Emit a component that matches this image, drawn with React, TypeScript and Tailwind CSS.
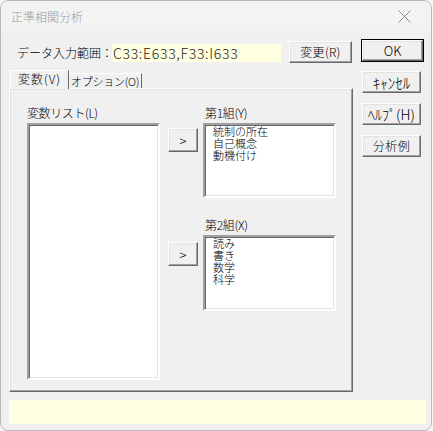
import React from 'react';

const FONT = { fontFamily: '"Noto Sans CJK JP", "Noto Sans", sans-serif' };

const btn3d =
  'flex items-center justify-center bg-[#f0f0f0] text-[12px] leading-none text-black whitespace-nowrap border border-t-white border-l-white border-b-[#696969] border-r-[#696969] shadow-[inset_-1px_-1px_0_#a0a0a0,inset_1px_1px_0_#e3e3e3]';

const sunken =
  'bg-white border-2 border-t-[#a0a0a0] border-l-[#a0a0a0] border-b-white border-r-white shadow-[inset_1px_1px_0_#696969,inset_-1px_-1px_0_#e3e3e3]';

const Btn: React.FC<{ label: string; className?: string }> = ({ label, className = '' }) => (
  <div className={`${btn3d} ${className}`}>{label}</div>
);

const ListBox: React.FC<{ items: string[]; className?: string }> = ({ items, className = '' }) => (
  <div className={`${sunken} ${className}`}>
    <div className="pl-[8px] text-[11px] leading-[12px] text-black">
      {items.map(it => (
        <div key={it}>{it}</div>
      ))}
    </div>
  </div>
);

const Group: React.FC<{ title: string; items: string[]; arrowTop: string; listH: string; className?: string }> = ({
  title, items, arrowTop, listH, className = ''
}) => (
  <div className={`flex items-start ${className}`}>
    <Btn label=">" className={`w-[30px] h-[24px] ${arrowTop} !text-[13px]`} />
    <div className="ml-[5px] w-[133px]">
      <div className="h-[16px] leading-[16px] text-[12px] pl-[2px] tracking-[-0.3px]">{title}</div>
      <ListBox items={items} className={`mt-[2px] ${listH}`} />
    </div>
  </div>
);

export default function App() {
  return (
    <div className="w-[433px] h-[431px] bg-[#f7f7f7] font-light" style={FONT}>
      <div className="w-[432px] h-[431px] rounded-[8px] border border-[#b9b9b9] overflow-hidden bg-[#f0f0f0] flex flex-col">
        {/* title bar */}
        <div className="h-[30px] shrink-0 bg-[#f3f3f3] flex items-center pl-[10px] pr-[20px] justify-between">
          <span className="text-[12px] text-[#999999] pt-[1px]">正準相関分析</span>
          <svg width="13" height="13" viewBox="0 0 13 13" className="mt-[1px]">
            <path d="M0.5 0.5 L12.5 12.5 M12.5 0.5 L0.5 12.5" stroke="#8c8c8c" strokeWidth="1" />
          </svg>
        </div>

        <div className="flex flex-col pl-[8px] pt-[8px]">
          <div className="flex">
            {/* left column */}
            <div className="w-[344px] flex flex-col">
              <div className="flex items-start h-[24px]">
                <div className="ml-[8px] mt-[5px] w-[95px] h-[18px] leading-[18px] text-[12px] whitespace-nowrap">データ入力範囲：</div>
                <div className="mt-[5px] w-[169px] h-[18px] bg-[#ffffe1] text-[14px] leading-[18px] pl-[1px] text-[#1a1a1a] tracking-[0.7px] whitespace-nowrap">
                  C33:E633,F33:I633
                </div>
                <Btn label="変更(R)" className="ml-[8px] mt-[2px] w-[63px] h-[22px] tracking-[0.3px]" />
              </div>

              {/* tabs */}
              <div className="mt-[7px] flex items-end h-[18px]">
                <div className="relative z-10 ml-[1px] w-[59px] h-[19px] -mb-[1px] bg-[#f0f0f0] border-t border-l border-r border-t-white border-l-white border-r-[#696969] flex items-center justify-center text-[12px] pb-[2px] whitespace-nowrap tracking-[1px]">
                  変数(V)
                </div>
                <div className="w-[73px] h-[15px] bg-[#f0f0f0] border-t border-r border-t-white border-r-[#696969] flex items-center justify-center text-[11px] pt-[1px] whitespace-nowrap tracking-[-0.2px]">
                  オプション(O)
                </div>
              </div>

              {/* panel */}
              <div className="w-[344px] h-[304px] border border-t-white border-l-white border-b-[#696969] border-r-[#696969] shadow-[inset_-1px_-1px_0_#a0a0a0,inset_1px_1px_0_#e3e3e3] flex pl-[17px] pt-[16px]">
                <div className="w-[133px]">
                  <div className="h-[16px] leading-[16px] text-[12px] tracking-[-0.4px]">変数リスト(L)</div>
                  <ListBox items={[]} className="mt-[2px] h-[257px]" />
                </div>
                <div className="ml-[8px] flex flex-col">
                  <Group title="第1組(Y)" items={['統制の所在', '自己概念', '動機付け']} arrowTop="mt-[23px]" listH="h-[75px]" />
                  <Group title="第2組(X)" items={['読み', '書き', '数学', '科学']} arrowTop="mt-[25px]" listH="h-[76px]" className="mt-[19px]" />
                </div>
              </div>
            </div>

            {/* right column */}
            <div className="ml-[8px] w-[63px] flex flex-col">
              <div className="h-[23px] border border-black">
                <Btn label="OK" className="w-full h-full !text-[13px]" />
              </div>
              <Btn label="ｷｬﾝｾﾙ" className="mt-[9px] ml-[1px] w-[59px] h-[22px] !text-[15px]" />
              <Btn label="ﾍﾙﾌﾟ(H)" className="mt-[10px] ml-[1px] w-[59px] h-[22px] !text-[14px]" />
              <Btn label="分析例" className="mt-[10px] ml-[1px] w-[59px] h-[22px] tracking-[0.5px]" />
            </div>
          </div>

          {/* status bar */}
          <div className="mt-[8px] w-[417px] h-[24px] bg-[#ffffe1]" />
        </div>
      </div>
    </div>
  );
}
